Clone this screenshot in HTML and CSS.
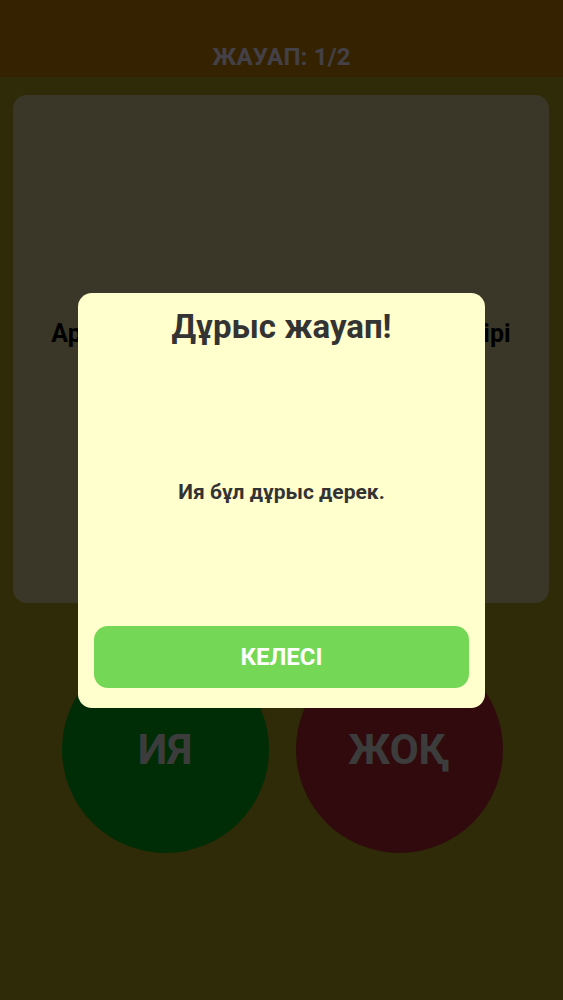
FILE: index.html
```html
<!DOCTYPE html>
<html lang="kk">
<head>
<meta charset="utf-8">
<title>Жауап</title>
<link rel="stylesheet" href="styles.css">
</head>
<body>
<div class="app">
  <header class="topbar"><span class="score">ЖАУАП: 1/2</span></header>
  <main class="content">
    <section class="card">
      <p class="question">Арал теңізі әлемдегі ірі көлдердің бірі</p>
    </section>
    <div class="answers">
      <button class="circle yes">ИЯ</button>
      <button class="circle no">ЖОҚ</button>
    </div>
  </main>
</div>
<div class="overlay">
  <div class="modal">
    <h2 class="modal-title">Дұрыс жауап!</h2>
    <div class="modal-body"><p>Ия бұл дұрыс дерек.</p></div>
    <button class="next">КЕЛЕСІ</button>
  </div>
</div>
</body>
</html>
```
FILE: styles.css
```css
* { box-sizing: border-box; }
html, body { margin: 0; padding: 0; }
body {
  width: 563px;
  height: 1000px;
  overflow: hidden;
  background: #a8961a;
  font-family: Roboto, "Noto Sans", "DejaVu Sans", sans-serif;
}
.app { height: 1000px; display: flex; flex-direction: column; }
.topbar {
  height: 77px;
  background: #bd7900;
  display: flex;
  justify-content: center;
  align-items: center;
  padding-top: 37px;
}
.score {
  color: #f2e6ff;
  font-weight: 700;
  font-size: 24px;
  letter-spacing: 0.2px;
}
.content { padding: 18px 14px 0 13px; display: flex; flex-direction: column; }
.card {
  height: 508px;
  background: #cfc48f;
  border-radius: 14px;
  display: flex;
  align-items: center;
  justify-content: center;
  padding-bottom: 32px;
}
.question {
  margin: 0;
  color: #000;
  font-weight: 700;
  font-size: 25px;
  letter-spacing: 0.1px;
  white-space: nowrap;
}
.answers {
  margin-top: 43px;
  display: flex;
  justify-content: center;
  gap: 27px;
  padding-left: 2px;
}
.circle {
  width: 207px;
  height: 207px;
  border-radius: 50%;
  border: 0;
  font-family: inherit;
  font-weight: 700;
  font-size: 42px;
  color: #d6d6d6;
  display: flex;
  align-items: center;
  justify-content: center;
}
.yes { background: #00a112; }
.no { background: #ab242b; }
.overlay {
  position: fixed;
  inset: 0;
  background: rgba(0,0,0,0.72);
  display: flex;
  align-items: center;
  justify-content: center;
}
.modal {
  width: 407px;
  height: 415px;
  background: #fffecc;
  border-radius: 14px;
  padding: 16px 16px 20px 16px;
  display: flex;
  flex-direction: column;
}
.modal-title {
  margin: 0;
  text-align: center;
  color: #333;
  font-size: 33px;
  line-height: 36px;
  font-weight: 700;
}
.modal-body {
  flex: 1;
  display: flex;
  align-items: center;
  justify-content: center;
  padding-top: 14px;
}
.modal-body p {
  margin: 0;
  color: #333;
  font-weight: 700;
  font-size: 21px;
}
.next {
  height: 62px;
  border: 0;
  border-radius: 14px;
  background: #74d856;
  color: #fff;
  font-family: inherit;
  font-weight: 700;
  font-size: 24px;
}
```
